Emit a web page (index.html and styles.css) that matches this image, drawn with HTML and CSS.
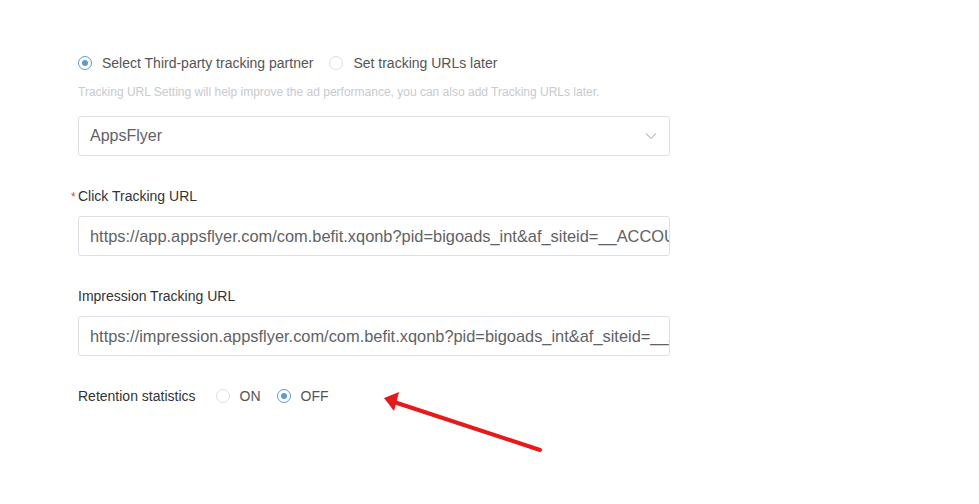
FILE: index.html
```html
<!DOCTYPE html>
<html>
<head>
<meta charset="utf-8">
<link rel="stylesheet" href="styles.css">
</head>
<body>
<div class="form">
  <div class="radio-row">
    <label class="radio checked"><span class="dot"></span><span class="rtext">Select Third-party tracking partner</span></label>
    <label class="radio"><span class="dot"></span><span class="rtext">Set tracking URLs later</span></label>
  </div>
  <div class="hint">Tracking URL Setting will help improve the ad performance, you can also add Tracking URLs later.</div>
  <div class="select">
    <span class="value">AppsFlyer</span>
    <svg class="chev" width="12" height="8" viewBox="0 0 12 8"><path d="M1 1.5 L6 6.5 L11 1.5" fill="none" stroke="#c0c4cc" stroke-width="1.2"/></svg>
  </div>
  <div class="label"><span class="req">*</span>Click Tracking URL</div>
  <div class="input">https://app.appsflyer.com/com.befit.xqonb?pid=bigoads_int&amp;af_siteid=__ACCOUNT_ID__&amp;c=__CAMPAIGN_NAME__</div>
  <div class="label">Impression Tracking URL</div>
  <div class="input">https://impression.appsflyer.com/com.befit.xqonb?pid=bigoads_int&amp;af_siteid=__ACCOUNT_ID__&amp;c=__CAMPAIGN_NAME__</div>
  <div class="retention">
    <span class="rlabel">Retention statistics</span>
    <label class="radio"><span class="dot"></span><span class="rtext">ON</span></label>
    <label class="radio checked"><span class="dot"></span><span class="rtext">OFF</span></label>
  </div>
</div>
<svg class="arrow" width="979" height="504" viewBox="0 0 979 504">
  <line x1="540" y1="450" x2="394" y2="402" stroke="#e8191b" stroke-width="4" stroke-linecap="round"/>
  <polygon points="384,398 399,392 394,411" fill="#e8191b"/>
</svg>
</body>
</html>
```

FILE: styles.css
```css
html, body {
  margin: 0;
  padding: 0;
  background: #fff;
}
body {
  font-family: "Liberation Sans", Arial, sans-serif;
  color: #303133;
  position: relative;
  width: 979px;
  height: 504px;
  overflow: hidden;
}
.form {
  padding: 53px 0 0 78px;
  width: 592px;
  display: flex;
  flex-direction: column;
}
.radio-row {
  display: flex;
  align-items: center;
  height: 20px;
  gap: 16px;
}
.radio {
  display: flex;
  align-items: center;
  font-size: 14px;
  color: #555;
}
.dot {
  width: 14px;
  height: 14px;
  box-sizing: border-box;
  border: 1px solid #dcdfe6;
  border-radius: 50%;
  margin-right: 10px;
  position: relative;
  background: #fff;
}
.radio.checked .dot {
  border-color: #5b9bd5;
}
.radio.checked .dot::after {
  content: "";
  position: absolute;
  left: 3px;
  top: 3px;
  width: 6px;
  height: 6px;
  border-radius: 50%;
  background: #5b9bd5;
}
.hint {
  margin-top: 11px;
  font-size: 12px;
  line-height: 16px;
  color: #c8cacf;
  white-space: nowrap;
}
.select {
  margin-top: 16px;
  height: 40px;
  box-sizing: border-box;
  border: 1px solid #dcdfe6;
  border-radius: 3px;
  display: flex;
  align-items: center;
  justify-content: space-between;
  padding: 0 12px 0 11px;
}
.value {
  font-size: 16px;
  color: #606266;
}
.label {
  margin-top: 30px;
  font-size: 14px;
  line-height: 20px;
  color: #333;
  position: relative;
}
.req {
  position: absolute;
  left: -7px;
  top: 1px;
  color: #e0435a;
  font-size: 12px;
}
.input {
  margin-top: 10px;
  height: 40px;
  box-sizing: border-box;
  border: 1px solid #dcdfe6;
  border-radius: 3px;
  padding: 0 0 0 11px;
  font-size: 16.4px;
  line-height: 38px;
  color: #606266;
  white-space: nowrap;
  overflow: hidden;
  text-overflow: clip;
}
.retention {
  margin-top: 30px;
  display: flex;
  align-items: center;
  height: 20px;
}
.rlabel {
  font-size: 14px;
  color: #333;
  margin-right: 20px;
}
.retention .radio {
  margin-right: 16px;
}
.arrow {
  position: absolute;
  left: 0;
  top: 0;
  pointer-events: none;
}
```
